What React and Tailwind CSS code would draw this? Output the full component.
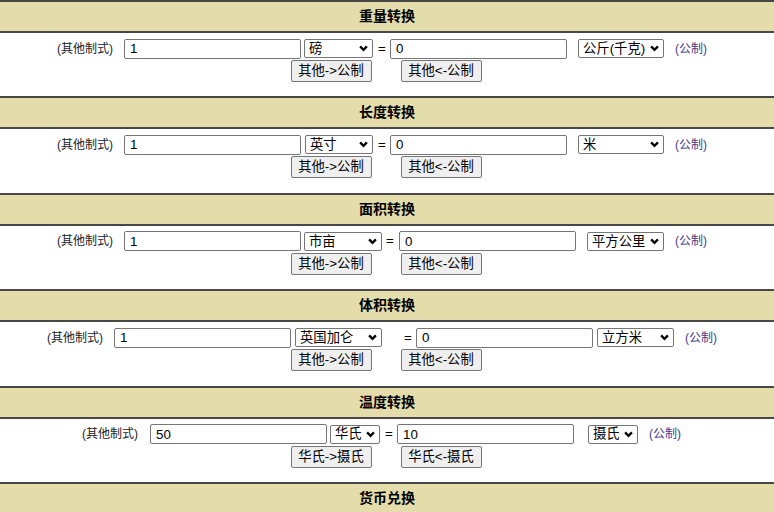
import { useState } from "react";

const sections = [
  {
    title: "重量转换",
    v1: "1",
    v2: "0",
    from: "磅",
    to: "公斤(千克)",
    btns: ["其他->公制", "其他<-公制"],
    row: "pr-[7px]",
    in1: "ml-[11px]",
    sel1: "ml-[3px] w-[69px]",
    eq: "ml-[5px]",
    in2: "ml-[4px]",
    sel2: "ml-[11px] w-[86px]",
  },
  {
    title: "长度转换",
    v1: "1",
    v2: "0",
    from: "英寸",
    to: "米",
    btns: ["其他->公制", "其他<-公制"],
    row: "pr-[7px]",
    in1: "ml-[11px]",
    sel1: "ml-[4px] w-[68px]",
    eq: "ml-[5px]",
    in2: "ml-[4px]",
    sel2: "ml-[11px] w-[86px]",
  },
  {
    title: "面积转换",
    v1: "1",
    v2: "0",
    from: "市亩",
    to: "平方公里",
    btns: ["其他->公制", "其他<-公制"],
    row: "pr-[7px]",
    in1: "ml-[11px]",
    sel1: "ml-[3px] w-[78px]",
    eq: "ml-[4px]",
    in2: "ml-[5px]",
    sel2: "ml-[11px] w-[77px]",
  },
  {
    title: "体积转换",
    v1: "1",
    v2: "0",
    from: "英国加仑",
    to: "立方米",
    btns: ["其他->公制", "其他<-公制"],
    row: "pr-[7px]",
    in1: "ml-[11px]",
    sel1: "ml-[4px] w-[87px]",
    eq: "ml-[22px]",
    in2: "ml-[4px]",
    sel2: "ml-[4px] w-[77px]",
  },
  {
    title: "温度转换",
    v1: "50",
    v2: "10",
    from: "华氏",
    to: "摄氏",
    btns: ["华氏->摄氏", "华氏<-摄氏"],
    row: "pr-[8px]",
    in1: "ml-[12px]",
    sel1: "ml-[3px] w-[50px]",
    eq: "ml-[5px]",
    in2: "ml-[4px]",
    sel2: "ml-[14px] w-[50px]",
  },
];

function Header({ title }) {
  return (
    <div className="h-[33px] bg-[#e4dcab] border-t-2 border-b-2 border-[#474747] flex items-center justify-center text-[14px] font-bold text-black">
      {title}
    </div>
  );
}

// looks like a native dropdown
function Select({ value, className }) {
  return (
    <div
      className={
        "h-[19px] flex items-center justify-between bg-white border border-[#767676] rounded-[2px] pl-[4px] pr-[4px] text-[13.33px] text-black whitespace-nowrap overflow-hidden " +
        className
      }
    >
      <span className="leading-none">{value}</span>
      <svg className="shrink-0 ml-[2px]" width="9" height="7" viewBox="0 0 9 7">
        <path d="M1.1 1.4 4.5 4.8 7.9 1.4" fill="none" stroke="#000" strokeWidth="2.3" />
      </svg>
    </div>
  );
}

function Section({ s }) {
  const [a, setA] = useState(s.v1);
  const [b, setB] = useState(s.v2);
  return (
    <div className="h-[96.4px]">
      <Header title={s.title} />
      <div className="pt-[5px]">
        <div className={"flex justify-center items-center h-[21px] " + s.row}>
          <span className="text-[12px] text-[#222] whitespace-nowrap w-[56px]">(其他制式)</span>
          <input
            value={a}
            onChange={(e) => setA(e.target.value)}
            className={"w-[177px] h-[20px] border border-[#767676] rounded-[2px] px-[5px] text-[13.33px] text-black bg-white " + s.in1}
          />
          <Select value={s.from} className={s.sel1} />
          <span className={"w-[8px] text-center text-[13.33px] " + s.eq}>=</span>
          <input
            value={b}
            onChange={(e) => setB(e.target.value)}
            className={"w-[177px] h-[20px] border border-[#767676] rounded-[2px] px-[5px] text-[13.33px] text-black bg-white " + s.in2}
          />
          <Select value={s.to} className={s.sel2} />
          <span className="ml-[11px] w-[35px] text-[12px] text-[#433a8a] whitespace-nowrap">(公制)</span>
        </div>
        <div className="flex justify-center gap-[29px] mt-[1px] pr-[2px]">
          {s.btns.map((t) => (
            <button
              key={t}
              className="w-[81px] h-[22px] bg-[#efefef] border border-[#767676] rounded-[2px] text-[13.33px] text-black"
            >
              {t}
            </button>
          ))}
        </div>
      </div>
    </div>
  );
}

export default function App() {
  return (
    <div className="w-[774px] h-[512px] overflow-hidden bg-white font-['Liberation_Sans','Noto_Sans_CJK_SC',sans-serif]">
      {sections.map((s) => (
        <Section key={s.title} s={s} />
      ))}
      <Header title="货币兑换" />
    </div>
  );
}
